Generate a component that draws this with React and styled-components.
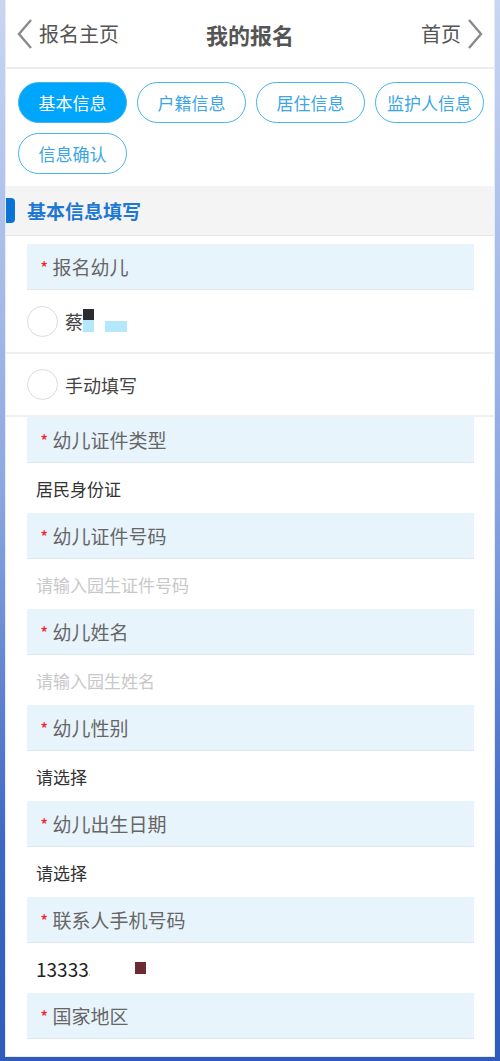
import styled, { createGlobalStyle } from "styled-components";

const GlobalStyle = createGlobalStyle`
  html, body {
    margin: 0;
    padding: 0;
    height: 1061px;
    overflow: hidden;
    font-family: "Noto Sans CJK SC", "Noto Sans", sans-serif;
  }
`;

const Frame = styled.div`
  height: 1061px;
  box-sizing: border-box;
  padding: 0 5px 4px 5px;
  background: linear-gradient(180deg, #c9d6f2 0%, #8ea8e2 45%, #3d67c4 80%, #2f5bbd 100%);
`;

const Page = styled.div`
  height: 100%;
  background: #fff;
  overflow: hidden;
  border-left: 1px solid #e6ecf7;
  border-right: 1px solid #e6ecf7;
  border-bottom: 1px solid #e6ecf7;
  box-sizing: border-box;
`;

const Header = styled.header`
  height: 69px;
  display: flex;
  align-items: center;
  justify-content: space-between;
  padding: 0 10px 0 10px;
  border-bottom: 2px solid #ececec;
  box-sizing: border-box;
`;

const NavLink = styled.div`
  display: flex;
  align-items: center;
  gap: 5px;
  font-size: 20px;
  color: #555;
  width: 120px;
  justify-content: ${({ right }) => (right ? "flex-end" : "flex-start")};
`;

const Title = styled.h1`
  margin: 0;
  font-size: 22px;
  font-weight: 700;
  color: #555;
`;

const Tabs = styled.div`
  display: flex;
  flex-wrap: wrap;
  gap: 10px 10px;
  padding: 13px 0 12px 12px;
`;

const Tab = styled.div`
  height: 41px;
  width: 109px;
  box-sizing: border-box;
  border-radius: 21px;
  display: flex;
  align-items: center;
  justify-content: center;
  font-size: 17px;
  white-space: nowrap;
  border: 1px solid #45b3ee;
  color: ${({ active }) => (active ? "#fff" : "#3aa6e6")};
  background: ${({ active }) => (active ? "#00a6fb" : "#fff")};
`;

const SectionHead = styled.div`
  height: 49px;
  background: #f4f4f4;
  border-bottom: 1px solid #e6e6e6;
  display: flex;
  align-items: center;
  gap: 12px;
`;

const SectionBar = styled.span`
  width: 9px;
  height: 25px;
  background: #0b72d6;
  border-radius: 0 4px 4px 0;
`;

const SectionTitle = styled.span`
  font-size: 19px;
  font-weight: 700;
  color: #1c78d2;
`;

const Form = styled.div`
  padding-top: 8px;
`;

const Label = styled.div`
  margin: 0 20px 0 21px;
  height: 45px;
  background: #e8f4fc;
  border-bottom: 1px solid #dde7ee;
  display: flex;
  align-items: center;
  padding-left: 13px;
  font-size: 19px;
  color: #666;
  gap: 4px;
`;

const Star = styled.span`
  color: #f2262a;
  font-size: 18px;
`;

const Value = styled.div`
  height: 50px;
  display: flex;
  align-items: center;
  padding-left: 30px;
  font-size: 17px;
  color: ${({ placeholder }) => (placeholder ? "#c8c8c8" : "#333")};
`;

const RadioRow = styled.div`
  height: ${({ h }) => h}px;
  box-sizing: border-box;
  display: flex;
  align-items: center;
  gap: 7px;
  padding-left: 21px;
  border-bottom: 2px solid #f0f0f0;
  font-size: 18px;
  color: #444;
`;

const Circle = styled.span`
  width: 31px;
  height: 31px;
  box-sizing: border-box;
  border-radius: 50%;
  border: 1px solid #dcdcdc;
`;

const Masked = styled.span`
  position: relative;
  display: inline-block;
  width: 60px;
  height: 24px;
  margin-left: -7px;
`;

const Block = styled.span`
  position: absolute;
  background: ${({ c }) => c};
`;

const Clip = styled.span`
  display: inline-block;
  width: 54px;
  overflow: hidden;
  white-space: nowrap;
  color: #222;
  font-size: 19px;
`;

const Dot = styled.span`
  width: 11px;
  height: 12px;
  background: #6b2d30;
  margin-left: 45px;
`;

const Chevron = ({ dir }) => (
  <svg width="18" height="32" viewBox="0 0 18 32">
    <path
      d={dir === "left" ? "M15 2 L3 16 L15 30" : "M3 2 L15 16 L3 30"}
      fill="none"
      stroke="#8a8a8a"
      strokeWidth="2.4"
    />
  </svg>
);

const fields = [
  { label: "幼儿证件类型", value: "居民身份证" },
  { label: "幼儿证件号码", value: "请输入园生证件号码", placeholder: true },
  { label: "幼儿姓名", value: "请输入园生姓名", placeholder: true },
  { label: "幼儿性别", value: "请选择" },
  { label: "幼儿出生日期", value: "请选择" },
];

const App = () => {
  return (
    <Frame>
      <GlobalStyle />
      <Page>
        <Header>
          <NavLink>
            <Chevron dir="left" />
            报名主页
          </NavLink>
          <Title>我的报名</Title>
          <NavLink right>
            首页
            <Chevron dir="right" />
          </NavLink>
        </Header>

        <Tabs>
          <Tab active>基本信息</Tab>
          <Tab>户籍信息</Tab>
          <Tab>居住信息</Tab>
          <Tab>监护人信息</Tab>
          <Tab>信息确认</Tab>
        </Tabs>

        <SectionHead>
          <SectionBar />
          <SectionTitle>基本信息填写</SectionTitle>
        </SectionHead>

        <Form>
          <Label>
            <Star>*</Star>报名幼儿
          </Label>
          <RadioRow h={64}>
            <Circle />
            <span>蔡</span>
            <Masked>
              {/* blurred-out part of the child's name */}
              <Block c="#2c2c30" style={{ left: 0, top: 0, width: 11, height: 11 }} />
              <Block c="#b3e8fc" style={{ left: 0, top: 11, width: 11, height: 12 }} />
              <Block c="#b3e8fc" style={{ left: 22, top: 12, width: 22, height: 11 }} />
            </Masked>
          </RadioRow>
          <RadioRow h={63}>
            <Circle />
            <span>手动填写</span>
          </RadioRow>

          {fields.map((f) => (
            <div key={f.label}>
              <Label>
                <Star>*</Star>
                {f.label}
              </Label>
              <Value placeholder={f.placeholder}>{f.value}</Value>
            </div>
          ))}

          <Label>
            <Star>*</Star>联系人手机号码
          </Label>
          <Value>
            <Clip>133333</Clip>
            <Dot />
          </Value>
          <Label>
            <Star>*</Star>国家地区
          </Label>
          <Value>中国</Value>
        </Form>
      </Page>
    </Frame>
  );
};

export default App;
